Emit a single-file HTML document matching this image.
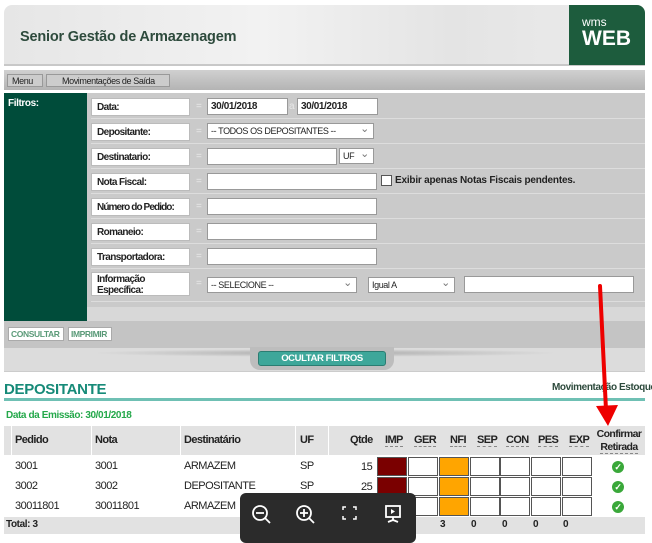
<!DOCTYPE html>
<html><head><meta charset="utf-8"><style>
*{margin:0;padding:0;box-sizing:border-box}
body{width:652px;height:539px;background:#fff;position:relative;overflow:hidden;font-family:"Liberation Sans Narrow","Liberation Sans",Arial,sans-serif;font-size:10px;color:#222;letter-spacing:-0.4px;white-space:nowrap}
.a{position:absolute}
.lbl{position:absolute;left:91px;width:99px;height:18px;background:#fff;border:1px solid #bbb;font-weight:bold;font-size:10px;padding:3px 0 0 5px;color:#222;letter-spacing:-0.6px}
.eq{position:absolute;left:196px;width:8px;height:18px;color:#e8e8e8;font-size:10px;padding-top:3px}
.inp{position:absolute;height:17px;background:#fff;border:1px solid #999;font-size:10px;padding:2px 3px}
.sel{position:absolute;height:16px;background:#fff;border:1px solid #999;font-size:9px;padding:2px 3px}
.sel:after{content:"⌄";position:absolute;right:4px;top:-2px;color:#777;font-size:11px}
.sep{position:absolute;left:91px;width:554px;height:1px;background:#aaa;border-bottom:1px solid #ddd}
.th{position:absolute;top:434px;font-weight:bold;font-size:11px;letter-spacing:-0.6px}
.td{position:absolute;font-size:11px;letter-spacing:-0.5px}
.sb{position:absolute;width:30px;height:19px;border:1px solid #555;background:#fff}
.ck{position:absolute;left:612px;width:12px;height:12px;border-radius:50%;background:#3aa83a;color:#fff;font-size:9px;line-height:12px;text-align:center;font-weight:bold}
.hu{border-bottom:1px dashed #888}
</style></head><body>
<div class="a" style="left:4px;top:5px;width:641px;height:61px;background:linear-gradient(90deg,#e6e6e6,#f2f2f2 40%,#e4e4e4 70%,#ececec);border-radius:8px 8px 0 0;border-bottom:2px solid #c8c8c8"></div>
<div class="a" style="left:20px;top:29px;font-size:14.5px;color:#2d4a3c;letter-spacing:-0.2px;font-weight:bold">Senior Gestão de Armazenagem</div>
<div class="a" style="left:569px;top:5px;width:76px;height:60px;background:#1d5c3d;border-radius:0 8px 0 0"></div>
<div class="a" style="left:582px;top:17px;color:#fff;font-size:12px;line-height:11px;letter-spacing:0">wms</div>
<div class="a" style="left:582px;top:28px;color:#fff;font-size:21px;font-weight:bold;line-height:22px;letter-spacing:0">WEB</div>
<div class="a" style="left:4px;top:70px;width:641px;height:20px;background:linear-gradient(#d0d0d0,#b4b4b4)"></div>
<div class="a" style="left:7px;top:74px;width:36px;height:13px;background:#ccc;border:1px solid #999;font-size:9px;padding:1px 4px">Menu</div>
<div class="a" style="left:46px;top:74px;width:124px;height:13px;background:#ccc;border:1px solid #999;font-size:9px;padding:1px 0 0 15px">Movimentações de Saída</div>
<div class="a" style="left:4px;top:93px;width:641px;height:228px;background:#cacaca"></div>
<div class="a" style="left:4px;top:93px;width:83px;height:228px;background:#004c3a"></div>
<div class="a" style="left:8px;top:98px;color:#fff;font-weight:bold;font-size:10px">Filtros:</div>
<div class="a" style="left:87px;top:307px;width:558px;height:14px;background:#d8d8d8"></div>

<div class="lbl" style="top:98px">Data:</div><div class="eq" style="top:98px">=</div>
<div class="inp" style="left:207px;top:98px;width:81px;font-weight:bold">30/01/2018</div>
<div class="a" style="left:289px;top:101px;color:#e8e8e8">a</div>
<div class="inp" style="left:297px;top:98px;width:81px;font-weight:bold">30/01/2018</div>
<div class="sep" style="top:118px"></div>

<div class="lbl" style="top:123px">Depositante:</div><div class="eq" style="top:123px">=</div>
<div class="sel" style="left:207px;top:123px;width:167px">-- TODOS OS DEPOSITANTES --</div>
<div class="sep" style="top:143px"></div>

<div class="lbl" style="top:148px">Destinatario:</div><div class="eq" style="top:148px">=</div>
<div class="inp" style="left:207px;top:148px;width:130px"></div>
<div class="sel" style="left:339px;top:148px;width:35px">UF</div>
<div class="sep" style="top:168px"></div>

<div class="lbl" style="top:173px">Nota Fiscal:</div><div class="eq" style="top:173px">=</div>
<div class="inp" style="left:207px;top:173px;width:170px"></div>
<div class="a" style="left:381px;top:175px;width:11px;height:11px;background:#fff;border:1px solid #555"></div>
<div class="a" style="left:395px;top:175px;font-weight:bold;font-size:10px;letter-spacing:-0.2px">Exibir apenas Notas Fiscais pendentes.</div>
<div class="sep" style="top:193px"></div>

<div class="lbl" style="top:198px;letter-spacing:-0.9px">Número do Pedido:</div><div class="eq" style="top:198px">=</div>
<div class="inp" style="left:207px;top:198px;width:170px"></div>
<div class="sep" style="top:218px"></div>

<div class="lbl" style="top:223px">Romaneio:</div><div class="eq" style="top:223px">=</div>
<div class="inp" style="left:207px;top:223px;width:170px"></div>
<div class="sep" style="top:243px"></div>

<div class="lbl" style="top:248px">Transportadora:</div><div class="eq" style="top:248px">=</div>
<div class="inp" style="left:207px;top:248px;width:170px"></div>
<div class="sep" style="top:268px"></div>

<div class="lbl" style="top:272px;height:24px;padding-top:1px;line-height:11px">Informação<br>Específica:</div><div class="eq" style="top:275px">=</div>
<div class="sel" style="left:207px;top:277px;width:150px">-- SELECIONE --</div>
<div class="sel" style="left:368px;top:277px;width:87px">Igual A</div>
<div class="inp" style="left:464px;top:276px;width:170px"></div>
<div class="sep" style="top:301px"></div>

<div class="a" style="left:4px;top:321px;width:641px;height:27px;background:#c4c4c4"></div>
<div class="a" style="left:8px;top:327px;width:56px;height:14px;background:#fff;border:1px solid #aaa;color:#5a9a78;font-weight:bold;font-size:8.5px;padding:1px 2px">CONSULTAR</div>
<div class="a" style="left:68px;top:327px;width:44px;height:14px;background:#fff;border:1px solid #aaa;color:#5a9a78;font-weight:bold;font-size:8.5px;padding:1px 2px">IMPRIMIR</div>
<div class="a" style="left:4px;top:348px;width:641px;height:24px;background:#dcdcdc;border-bottom:1px solid #ccc"></div>
<div class="a" style="left:90px;top:349px;width:470px;height:8px;background:radial-gradient(ellipse at center,#aaa,#dcdcdc 70%)"></div>
<div class="a" style="left:250px;top:347px;width:144px;height:23px;background:#bdbdbd;border-radius:0 0 10px 10px"></div>
<div class="a" style="left:258px;top:351px;width:128px;height:15px;background:#3ea79a;border:1px solid #2b7d72;border-radius:3px;color:#fff;font-weight:bold;font-size:9.5px;text-align:center;line-height:13px">OCULTAR FILTROS</div>

<div class="a" style="left:4px;top:381px;font-size:15px;font-weight:bold;color:#168a78;letter-spacing:-0.3px">DEPOSITANTE</div>
<div class="a" style="left:552px;top:382px;font-size:10px;font-weight:bold;color:#2d4a3c">Movimentação Estoque</div>
<div class="a" style="left:4px;top:398px;width:641px;height:3px;background:#6fc0b4"></div>
<div class="a" style="left:6px;top:410px;font-size:10px;color:#24a84a;font-weight:bold">Data da Emissão: 30/01/2018</div>

<div class="a" style="left:4px;top:426px;width:641px;height:29px;background:#e2e2e2"></div>
<div class="a" style="left:11px;top:426px;width:1px;height:29px;background:#fff"></div>
<div class="a" style="left:91px;top:426px;width:1px;height:29px;background:#fff"></div>
<div class="a" style="left:180px;top:426px;width:1px;height:29px;background:#fff"></div>
<div class="a" style="left:295px;top:426px;width:1px;height:29px;background:#fff"></div>
<div class="a" style="left:328px;top:426px;width:1px;height:29px;background:#fff"></div>
<div class="th" style="left:15px">Pedido</div>
<div class="th" style="left:95px">Nota</div>
<div class="th" style="left:184px">Destinatário</div>
<div class="th" style="left:300px">UF</div>
<div class="th" style="left:350px">Qtde</div>
<div class="th hu" style="left:385px">IMP</div>
<div class="th hu" style="left:414px">GER</div>
<div class="th hu" style="left:450px">NFI</div>
<div class="th hu" style="left:477px">SEP</div>
<div class="th hu" style="left:506px">CON</div>
<div class="th hu" style="left:538px">PES</div>
<div class="th hu" style="left:569px">EXP</div>
<div class="a" style="left:594px;top:428px;font-weight:bold;font-size:10.5px;line-height:13px;text-align:center;width:50px;letter-spacing:-0.6px">Confirmar<br><span class="hu">Retirada</span></div>

<div class="td" style="left:15px;top:460px">3001</div><div class="td" style="left:95px;top:460px">3001</div><div class="td" style="left:184px;top:460px">ARMAZEM</div><div class="td" style="left:300px;top:460px">SP</div><div class="td" style="left:361px;top:461px">15</div>
<div class="td" style="left:15px;top:480px">3002</div><div class="td" style="left:95px;top:480px">3002</div><div class="td" style="left:184px;top:480px">DEPOSITANTE</div><div class="td" style="left:300px;top:480px">SP</div><div class="td" style="left:361px;top:481px">25</div>
<div class="td" style="left:15px;top:500px">30011801</div><div class="td" style="left:95px;top:500px">30011801</div><div class="td" style="left:184px;top:500px">ARMAZEM</div>

<div class="sb" style="left:377px;top:457px;background:#7a0000"></div><div class="sb" style="left:408px;top:457px"></div><div class="sb" style="left:439px;top:457px;background:#ffa500"></div><div class="sb" style="left:470px;top:457px"></div><div class="sb" style="left:500px;top:457px"></div><div class="sb" style="left:531px;top:457px"></div><div class="sb" style="left:562px;top:457px"></div>
<div class="sb" style="left:377px;top:477px;background:#7a0000"></div><div class="sb" style="left:408px;top:477px"></div><div class="sb" style="left:439px;top:477px;background:#ffa500"></div><div class="sb" style="left:470px;top:477px"></div><div class="sb" style="left:500px;top:477px"></div><div class="sb" style="left:531px;top:477px"></div><div class="sb" style="left:562px;top:477px"></div>
<div class="sb" style="left:408px;top:497px"></div><div class="sb" style="left:439px;top:497px;background:#ffa500"></div><div class="sb" style="left:470px;top:497px"></div><div class="sb" style="left:500px;top:497px"></div><div class="sb" style="left:531px;top:497px"></div><div class="sb" style="left:562px;top:497px"></div>
<div class="ck" style="top:461px">✓</div><div class="ck" style="top:481px">✓</div><div class="ck" style="top:501px">✓</div>

<div class="a" style="left:4px;top:517px;width:641px;height:17px;background:#e2e2e2"></div>
<div class="a" style="left:6px;top:519px;font-weight:bold;font-size:10px">Total: 3</div>
<div class="a" style="left:440px;top:519px;font-weight:bold;font-size:10px">3</div>
<div class="a" style="left:471px;top:519px;font-weight:bold;font-size:10px">0</div>
<div class="a" style="left:502px;top:519px;font-weight:bold;font-size:10px">0</div>
<div class="a" style="left:533px;top:519px;font-weight:bold;font-size:10px">0</div>
<div class="a" style="left:563px;top:519px;font-weight:bold;font-size:10px">0</div>

<svg class="a" style="left:0;top:0" width="652" height="539"><line x1="600" y1="286" x2="606" y2="410" stroke="#e00" stroke-width="4" stroke-linecap="round"/><polygon points="596,406 618,405 608,426" fill="#e00"/></svg>

<div class="a" style="left:240px;top:493px;width:176px;height:50px;background:#2b2b2b;border-radius:6px"></div>
<svg class="a" style="left:240px;top:493px" width="176" height="46" fill="none" stroke="#fff" stroke-width="1.8">
<circle cx="20" cy="20" r="7"/><line x1="25" y1="25" x2="30" y2="30"/><line x1="16" y1="20" x2="24" y2="20"/>
<circle cx="64" cy="20" r="7"/><line x1="69" y1="25" x2="74" y2="30"/><line x1="60" y1="20" x2="68" y2="20"/><line x1="64" y1="16" x2="64" y2="24"/>
<path d="M103 17v-3h3M113 14h3v3M103 23v3h3M116 23v3h-3" stroke-width="1.5"/>
<rect x="146" y="13" width="14" height="11"/><path d="M151 16l4 2.5-4 2.5z" fill="#fff" stroke="none"/><path d="M153 24v3M148 29l5-2 5 2"/>
</svg>
</body></html>
